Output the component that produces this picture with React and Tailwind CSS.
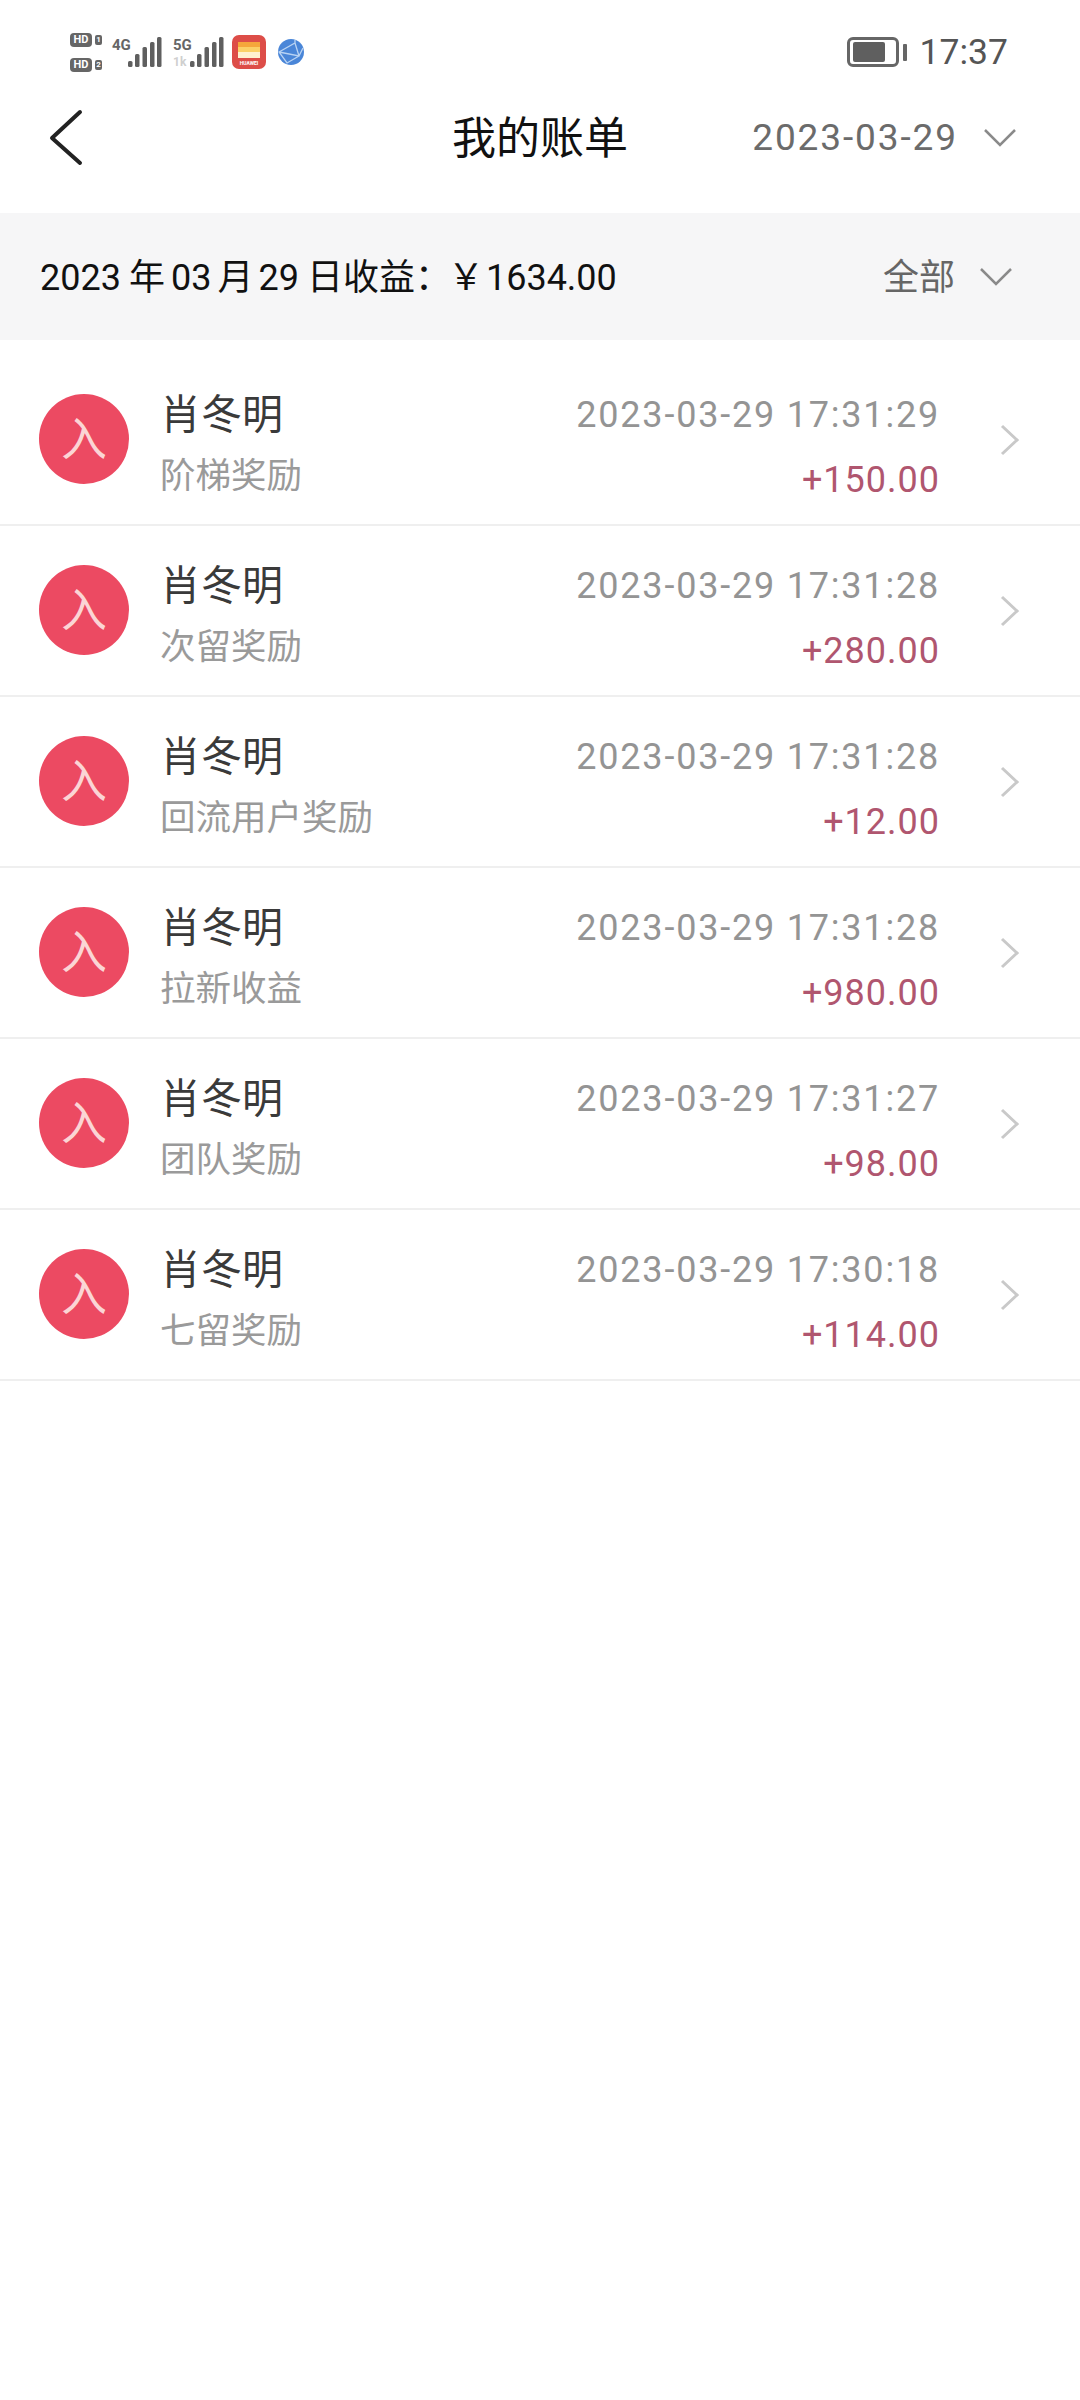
import React from 'react';

const rows = [
  { type: '阶梯奖励', time: '2023-03-29 17:31:29', amount: '+150.00' },
  { type: '次留奖励', time: '2023-03-29 17:31:28', amount: '+280.00' },
  { type: '回流用户奖励', time: '2023-03-29 17:31:28', amount: '+12.00' },
  { type: '拉新收益', time: '2023-03-29 17:31:28', amount: '+980.00' },
  { type: '团队奖励', time: '2023-03-29 17:31:27', amount: '+98.00' },
  { type: '七留奖励', time: '2023-03-29 17:30:18', amount: '+114.00' },
];

function Signal() {
  return (
    <svg width="34" height="30" viewBox="0 0 34 30" fill="#5f5f5f">
      <rect x="0" y="24" width="4.5" height="6" rx="1.5" />
      <rect x="7" y="17" width="4.5" height="13" rx="1.5" />
      <rect x="14.5" y="10" width="4.5" height="20" rx="1.5" />
      <rect x="22" y="5" width="4.5" height="25" rx="1.5" />
      <rect x="29" y="0" width="4.5" height="30" rx="1.5" />
    </svg>
  );
}

function HdBadge({ n }) {
  return (
    <div className="flex items-center gap-[3px]">
      <span className="w-[22px] h-[14px] rounded-[4px] bg-[#666666] text-white text-[11px] leading-[14px] font-bold text-center">HD</span>
      <span className="w-[7px] h-[10px] rounded-[2px] bg-[#666666] text-white text-[8px] leading-[10px] font-bold text-center">{n}</span>
    </div>
  );
}

function StatusBar() {
  return (
    <div className="h-[80px] pt-[33px] pl-[70px] pr-[72px] flex items-start justify-between">
      <div className="flex items-start">
        <div className="flex flex-col gap-[11px]">
          <HdBadge n="1" />
          <HdBadge n="2" />
        </div>
        <div className="ml-[10px] flex items-start">
          <span className="w-[16px] text-[15px] leading-[16px] font-bold text-[#666666] mt-[4px] whitespace-nowrap">4G</span>
          <div className="mt-[4px]"><Signal /></div>
        </div>
        <div className="ml-[11px] flex items-start">
          <div className="w-[17px] mt-[4px] flex flex-col">
            <span className="text-[15px] leading-[16px] font-bold text-[#666666] whitespace-nowrap">5G</span>
            <span className="mt-[3px] text-[12px] leading-[12px] font-bold text-[#cfcfcf]">1k</span>
          </div>
          <div className="mt-[4px]"><Signal /></div>
        </div>
        <svg className="ml-[8px] mt-[2px]" width="34" height="34" viewBox="0 0 34 34">
          <rect width="34" height="34" rx="7" fill="#dd4d48" />
          <rect x="6" y="7" width="22" height="5" fill="#f5a63b" />
          <rect x="6" y="12" width="22" height="5" fill="#fbd067" />
          <rect x="6" y="17" width="22" height="6" fill="#fff0d0" />
          <text x="17" y="30" textAnchor="middle" fontSize="5" fontWeight="700" fill="#ffffff">HUAWEI</text>
        </svg>
        <svg className="ml-[12px] mt-[6px]" width="26" height="26" viewBox="0 0 26 26">
          <circle cx="13" cy="13" r="13" fill="#4a86d8" />
          <path d="M1 13 L17 4 L21 17 L9 24 Z M1 13 L21 17 L25 9 M17 4 L17 1" fill="none" stroke="#b9d3f3" strokeWidth="1.3" />
        </svg>
      </div>
      <div className="-mt-[1px] flex items-center gap-[13px]">
        <div className="flex items-center gap-[4px]">
          <div className="w-[52px] h-[30px] rounded-[6px] border-[3px] border-[#666666] px-[3px] py-[2px] flex">
            <div className="w-[32px] bg-[#5f5f5f] rounded-[2px]" />
          </div>
          <div className="w-[4px] h-[17px] bg-[#666666] rounded-[1px]" />
        </div>
        <span className="text-[35.5px] leading-[40px] text-[#555555]">17:37</span>
      </div>
    </div>
  );
}

function Header() {
  return (
    <div className="relative h-[133px] flex items-start justify-between pl-[48px] pr-[63px]">
      <svg className="mt-[29px]" width="36" height="58" viewBox="0 0 36 58" fill="none" stroke="#222222" strokeWidth="4" strokeLinecap="round" strokeLinejoin="round">
        <path d="M32 3 L4 29 L32 54" />
      </svg>
      <h1 className="absolute left-[452px] top-[30px] text-[44px] leading-[58px] text-[#111111]">我的账单</h1>
      <div className="flex items-center gap-[25px] mt-[36px]">
        <span className="text-[37px] leading-[44px] text-[#6b6b6b] tracking-[1.9px]">2023-03-29</span>
        <svg width="34" height="20" viewBox="0 0 34 20" fill="none" stroke="#8a8a8a" strokeWidth="2.5">
          <path d="M2 2 L17 17 L32 2" />
        </svg>
      </div>
    </div>
  );
}

function Summary() {
  return (
    <div className="h-[127px] bg-[#f6f6f7] flex items-center justify-between pl-[40px] pr-[67px]">
      <span className="mt-[2px] text-[36px] leading-[48px] text-[#111111] whitespace-nowrap">
        2023<span className="ml-[8px]">年</span><span className="ml-[6px]">03</span><span className="ml-[6px]">月</span><span className="ml-[5px]">29</span><span className="ml-[8px]">日收益：</span><span className="-ml-[3px]">￥</span><span className="ml-[2px]">1634.00</span>
      </span>
      <div className="flex items-center gap-[24px]">
        <span className="mt-[2px] text-[36px] leading-[48px] text-[#666666]">全部</span>
        <svg width="34" height="20" viewBox="0 0 34 20" fill="none" stroke="#8a8a8a" strokeWidth="2.5">
          <path d="M2 2 L17 17 L32 2" />
        </svg>
      </div>
    </div>
  );
}

function Row({ type, time, amount }) {
  return (
    <div className="h-[171px] flex items-center border-b-2 border-[#efefef] pl-[39px] pr-[60px]">
      <div className="w-[90px] h-[90px] -mt-[1px] rounded-full bg-[#ec4a62] flex items-center justify-center shrink-0">
        <span className="text-[46px] leading-[50px] text-[#fbd5d5]">入</span>
      </div>
      <div className="ml-[31px] flex-1 mt-[8px]">
        <div className="text-[41px] leading-[52px] text-[#3a3a3a]">肖冬明</div>
        <div className="mt-[12px] text-[35.5px] leading-[46px] text-[#9a9a9a]">{type}</div>
      </div>
      <div className="flex flex-col items-end mt-[14px]">
        <div className="text-[36px] leading-[48px] text-[#949494] tracking-[1.8px]">{time}</div>
        <div className="mt-[19px] text-[36px] leading-[44px] text-[#b0566f] tracking-[1px]">{amount}</div>
      </div>
      <svg className="ml-[60px]" width="20" height="32" viewBox="0 0 20 32" fill="none" stroke="#c9c9c9" strokeWidth="3">
        <path d="M2 2 L17 16 L2 30" />
      </svg>
    </div>
  );
}

export default function App() {
  return (
    <div className="w-[1080px] h-[2400px] bg-white font-['Roboto','Noto_Sans_CJK_SC',sans-serif]">
      <StatusBar />
      <Header />
      <Summary />
      <div className="pt-[15px]">
        {rows.map((r, i) => (
          <Row key={i} {...r} />
        ))}
      </div>
    </div>
  );
}
